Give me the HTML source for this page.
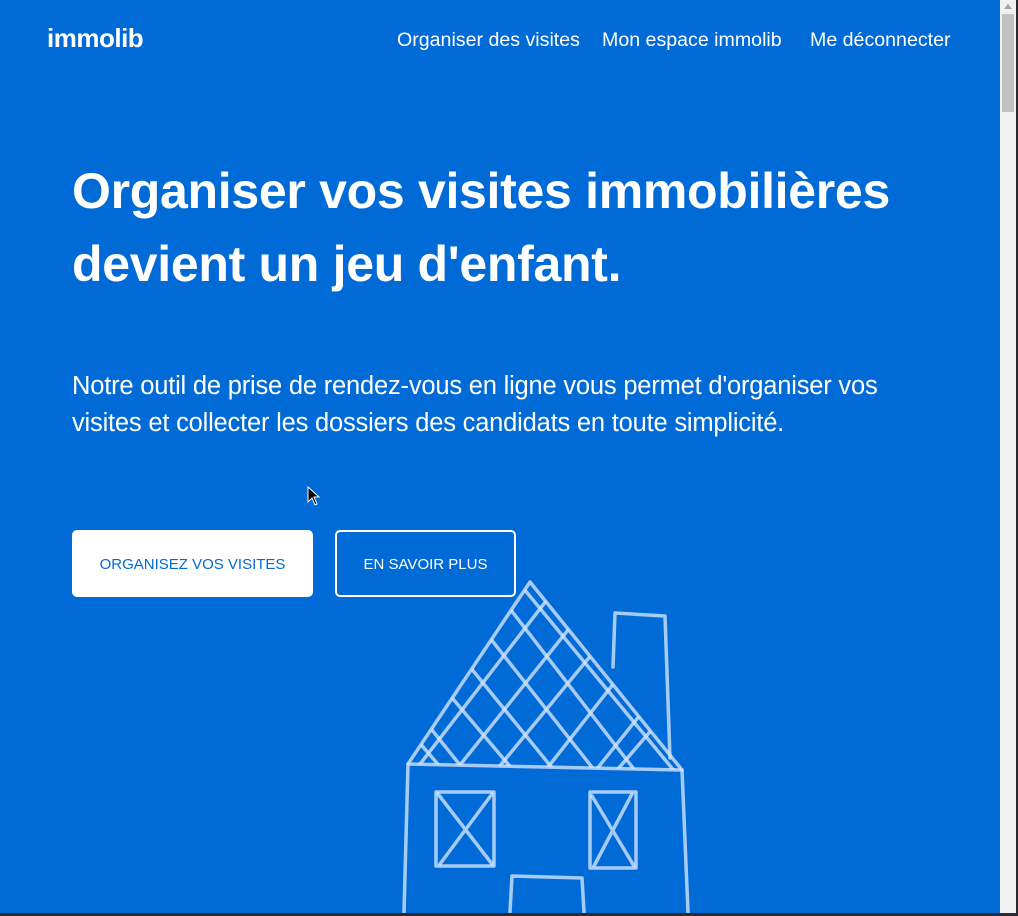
<!DOCTYPE html>
<html><head><meta charset="utf-8"><style>
html,body{margin:0;padding:0;}
body{width:1018px;height:916px;overflow:hidden;background:#006bd6;font-family:"Liberation Sans",sans-serif;color:#fff;position:relative;}
.logo{position:absolute;left:47px;top:23px;font-size:26px;font-weight:bold;letter-spacing:-0.5px;}
.nav{position:absolute;top:29px;font-size:19.6px;}
h1{position:absolute;left:72px;top:155px;margin:0;font-size:50px;line-height:73px;font-weight:bold;letter-spacing:-0.3px;white-space:nowrap;}
p{position:absolute;left:72px;top:368px;margin:0;font-size:25.5px;line-height:37px;white-space:nowrap;letter-spacing:-0.2px;}
.btn{position:absolute;top:530px;height:67px;box-sizing:border-box;border-radius:5px;font-size:15px;display:flex;align-items:center;justify-content:center;padding-top:2px;}
.b1{left:72px;width:241px;background:#fff;color:#006bd6;}
.b2{left:335px;width:181px;border:2px solid #fff;color:#fff;}
.sb{position:absolute;left:1000px;top:0;width:16px;height:913px;background:#f1f1f1;}
.th{position:absolute;left:1002px;top:14px;width:12px;height:98px;background:#c1c1c1;}
.edge{position:absolute;left:1016px;top:0;width:2px;height:916px;background:#2a2a30;}
.bot{position:absolute;left:0;top:913px;width:1018px;height:3px;background:#2a2a30;}
</style></head><body>
<div class="logo">immolib</div>
<div class="nav" style="left:397px">Organiser des visites</div>
<div class="nav" style="left:602px">Mon espace immolib</div>
<div class="nav" style="left:810px">Me déconnecter</div>
<h1>Organiser vos visites immobilières<br>devient un jeu d'enfant.</h1>
<p>Notre outil de prise de rendez-vous en ligne vous permet d'organiser vos<br>visites et collecter les dossiers des candidats en toute simplicité.</p>
<div class="btn b1">ORGANISEZ VOS VISITES</div>
<div class="btn b2">EN SAVOIR PLUS</div>
<svg style="position:absolute;left:0;top:0" width="1000" height="913">
<defs><clipPath id="roof"><polygon points="530,582 408,764 682,770"/></clipPath></defs>
<g fill="none" stroke="#cfe4fb" stroke-opacity="0.8" stroke-width="3.5" stroke-linecap="round" stroke-linejoin="round">
<polyline points="408,764 530,582 682,770"/>
<polyline points="404,912 408,764 682,770 688,912"/>
<polyline points="613,667 615,613 665,616 670,758"/>
<g clip-path="url(#roof)">
<path d="M400,720 L460,790 M400,690 L480,790 M420,660 L530,790 M440,630 L570,790 M460,600 L610,790 M480,570 L650,790 M500,560 L690,790"/>
<path d="M660,720 L600,790 M660,690 L580,790 M640,650 L530,790 M620,620 L480,790 M600,590 L440,790 M570,570 L400,790 M540,560 L380,790"/>
</g>
<rect x="436" y="792" width="58" height="74"/><path d="M438,794 L492,864 M492,794 L440,864"/>
<rect x="590" y="792" width="46" height="76"/><path d="M592,796 L634,866 M632,794 L594,866"/>
<polyline points="510,912 512,876 582,878 584,912"/>
</g>
<path d="M308,487 L308,502 L312,498 L315,505 L317,504 L314,497 L319,497 Z" fill="#000" stroke="#fff" stroke-width="1"/>
</svg>
<div class="sb"></div><div class="th"></div>
<div style="position:absolute;left:1004px;top:4px;width:0;height:0;border-left:4px solid transparent;border-right:4px solid transparent;border-bottom:5px solid #a3a3a3"></div>
<div class="edge"></div><div class="bot"></div>
</body></html>
